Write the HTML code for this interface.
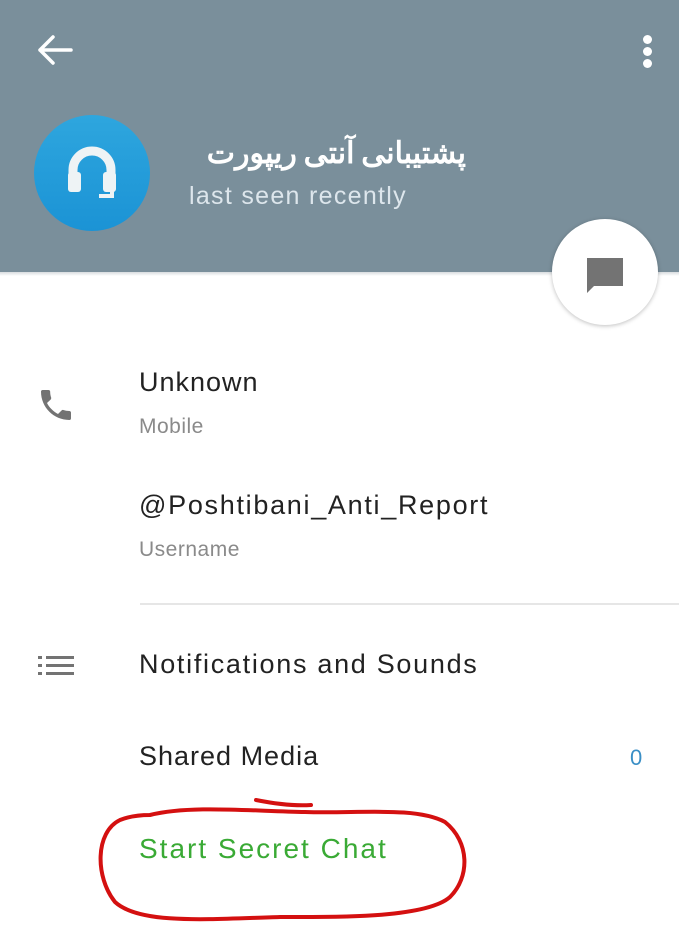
<!DOCTYPE html>
<html><head><meta charset="utf-8"><style>
body{margin:0;width:679px;height:951px;background:#fff;position:relative;overflow:hidden;font-family:"Liberation Sans","Noto Sans CJK SC",sans-serif}
.hdr{position:absolute;left:0;top:0;width:679px;height:272px;background:#7a8f9b}
.shadow{position:absolute;left:0;top:272px;width:679px;height:4px;background:linear-gradient(#d8dcdf,#fff)}
.t{position:absolute;white-space:nowrap}
</style></head><body>
<div class="hdr"></div><div class="shadow"></div>
<svg style="position:absolute;left:36px;top:32px" width="40" height="36" viewBox="0 0 40 36"><path d="M4 18H35M4 18L17 5M4 18L17 31" stroke="#fff" stroke-width="3.5" fill="none" stroke-linecap="round"/></svg>
<div style="position:absolute;left:643px;top:35px;width:9px;height:9px;border-radius:50%;background:#fff;box-shadow:0 12px 0 #fff,0 24px 0 #fff"></div>
<div style="position:absolute;left:34px;top:115px;width:116px;height:116px;border-radius:50%;background:linear-gradient(#2ea6de,#1b93d5)"></div>
<svg style="position:absolute;left:62px;top:142px" width="60" height="64" viewBox="0 0 60 64"><path d="M11 40V28a19 19 0 0 1 38 0v12" stroke="#eef3f5" stroke-width="9" fill="none"/><rect x="6" y="30" width="13" height="20" rx="3" fill="#eef3f5"/><rect x="41" y="30" width="13" height="20" rx="3" fill="#eef3f5"/><path d="M50 48v6H37" stroke="#eef3f5" stroke-width="4" fill="none"/></svg>
<div class="t" style="left:188px;top:128px;color:#fff;font-size:30px;font-weight:bold;font-family:'Noto Sans CJK SC',sans-serif;direction:rtl;width:278px;text-align:right">پشتیبانی آنتی ریپورت</div>
<div class="t" style="left:189px;top:182px;color:#dde6ec;font-size:25px;letter-spacing:1.3px">last seen recently</div>
<div style="position:absolute;left:552px;top:219px;width:106px;height:106px;border-radius:50%;background:#fff;box-shadow:0 1px 4px rgba(0,0,0,.25)"></div>
<svg style="position:absolute;left:584px;top:255px" width="44" height="44" viewBox="0 0 44 44"><path d="M3 3h36v28H10l-7 7z" fill="#737373"/></svg>
<svg style="position:absolute;left:36px;top:385px" width="40" height="40" viewBox="0 0 24 24"><path d="M6.6 10.8c1.4 2.8 3.8 5.1 6.6 6.6l2.2-2.2c.3-.3.7-.4 1-.2 1.1.4 2.3.6 3.6.6.6 0 1 .4 1 1V20c0 .6-.4 1-1 1C10.6 21 3 13.4 3 4c0-.6.4-1 1-1h3.5c.6 0 1 .4 1 1 0 1.3.2 2.5.6 3.6.1.3 0 .7-.2 1z" fill="#737373"/></svg>
<div class="t" style="left:139px;top:367px;font-size:27px;color:#222;letter-spacing:1px">Unknown</div>
<div class="t" style="left:139px;top:415px;font-size:21px;color:#8a8a8a;letter-spacing:0.5px">Mobile</div>
<div class="t" style="left:139px;top:490px;font-size:27px;color:#222;letter-spacing:1.7px">@Poshtibani_Anti_Report</div>
<div class="t" style="left:139px;top:538px;font-size:21px;color:#8a8a8a;letter-spacing:0.5px">Username</div>
<div style="position:absolute;left:140px;top:603px;width:539px;height:2px;background:#e6e6e6"></div>
<svg style="position:absolute;left:38px;top:655px" width="36" height="22" viewBox="0 0 36 22"><g fill="#737373"><rect x="0" y="1" width="4" height="3"/><rect x="8" y="1" width="28" height="3"/><rect x="0" y="9" width="4" height="3"/><rect x="8" y="9" width="28" height="3"/><rect x="0" y="17" width="4" height="3"/><rect x="8" y="17" width="28" height="3"/></g></svg>
<div class="t" style="left:139px;top:649px;font-size:27px;color:#222;letter-spacing:1.7px">Notifications and Sounds</div>
<div class="t" style="left:139px;top:741px;font-size:27px;color:#222;letter-spacing:1px">Shared Media</div>
<div class="t" style="left:630px;top:745px;font-size:22px;color:#3a8fc6">0</div>
<div class="t" style="left:139px;top:833px;font-size:28px;color:#3aaa35;letter-spacing:2px">Start Secret Chat</div>
<svg style="position:absolute;left:0;top:0" width="679" height="951"><path d="M256 800c20 4 40 6 55 5M150 815c40-10 100-4 155-3 50 2 110-6 140 10 25 20 25 55 5 75-25 22-120 20-170 20-70 2-140 8-165-15-20-25-20-70 5-82 10-4 20-5 30-5" stroke="#d41010" stroke-width="4" fill="none" stroke-linecap="round"/></svg>
</body></html>
